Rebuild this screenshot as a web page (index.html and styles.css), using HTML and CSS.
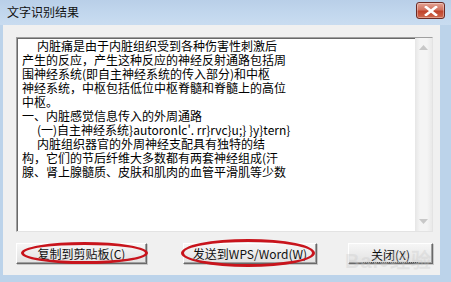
FILE: index.html
```html
<!DOCTYPE html>
<html lang="zh-CN">
<head>
<meta charset="utf-8">
<title>文字识别结果</title>
<link rel="stylesheet" href="styles.css">
</head>
<body>
<div class="window">
  <div class="titlebar">
    <span class="title">文字识别结果</span>
    <div class="close-btn">
      <svg width="14" height="10" viewBox="0 0 14 10"><path d="M2 1 L12 9 M12 1 L2 9" stroke="#fff" stroke-width="2.6" stroke-linecap="square"/></svg>
    </div>
  </div>
  <div class="client">
    <div class="editbox">
      <div class="text">
        <div class="line ind">内脏痛是由于内脏组织受到各种伤害性刺激后</div>
        <div class="line">产生的反应，产生这种反应的神经反射通路包括周</div>
        <div class="line">围神经系统(即自主神经系统的传入部分)和中枢</div>
        <div class="line">神经系统，中枢包括低位中枢脊髓和脊髓上的高位</div>
        <div class="line">中枢。</div>
        <div class="line">一、内脏感觉信息传入的外周通路</div>
        <div class="line ind">(一)自主神经系统}autoronlc'. rr}rvc}u;} }y}tern}</div>
        <div class="line ind">内脏组织器官的外周神经支配具有独特的结</div>
        <div class="line">构，它们的节后纤维大多数都有两套神经组成(汗</div>
        <div class="line">腺、肾上腺髓质、皮肤和肌肉的血管平滑肌等少数</div>
      </div>
      <div class="scrollbar">
        <svg class="arrow" width="9" height="5" viewBox="0 0 9 5"><path d="M0 5 L4.5 0 L9 5 Z" fill="#c8c8c8"/></svg>
        <svg class="arrow" width="9" height="5" viewBox="0 0 9 5"><path d="M0 0 L4.5 5 L9 0 Z" fill="#c8c8c8"/></svg>
      </div>
    </div>
    <div class="buttons">
      <div class="btn btn-copy">复制到剪贴板(C)</div>
      <div class="btn btn-send">发送到WPS/Word(W)</div>
      <div class="btn btn-close"><span class="focus">关闭(X)</span></div>
    </div>
    <div class="watermark">Bai<span class="wm-paw">●</span>经验</div>
    <div class="ellipse e1"></div>
    <div class="ellipse e2"></div>
  </div>
</div>
</body>
</html>
```

FILE: styles.css
```css
html, body {
  margin: 0;
  padding: 0;
}
body {
  width: 451px;
  height: 282px;
  overflow: hidden;
  font-family: "Noto Sans CJK SC", "Liberation Sans", sans-serif;
  font-size: 12px;
  color: #000;
}
.window {
  width: 451px;
  height: 282px;
  display: flex;
  flex-direction: column;
  background: #bcd3ea;
  box-sizing: border-box;
}
.titlebar {
  height: 25px;
  flex: none;
  display: flex;
  align-items: center;
  justify-content: space-between;
  padding: 0 6px 0 7px;
  background: linear-gradient(#b9cfe8, #c3d8ee 60%, #c9dcf0);
  box-sizing: border-box;
}
.title {
  font-size: 12px;
  color: #111;
  line-height: 14px;
  margin-top: -1px;
}
.close-btn {
  width: 29px;
  height: 17px;
  margin-top: -4px;
  box-sizing: border-box;
  border: 1px solid #6b2a24;
  border-radius: 3px;
  background: linear-gradient(#e3a394, #d1725f 45%, #c0432c 55%, #cf6a4f);
  display: flex;
  align-items: center;
  justify-content: center;
  box-shadow: inset 0 0 0 1px rgba(255,255,255,0.35);
}
.client {
  position: relative;
  flex: 1;
  margin: 0 11px 7px 3px;
  background: #f0f0f0;
  display: flex;
  flex-direction: column;
  padding: 12px 7px 0 13px;
}
.editbox {
  height: 195px;
  box-sizing: border-box;
  background: #fff;
  border-top: 1px solid #a0a0a0;
  border-left: 1px solid #a0a0a0;
  border-right: 1px solid #e3e3e3;
  border-bottom: 1px solid #e3e3e3;
  box-shadow: inset 1px 1px 0 #696969;
  display: flex;
}
.text {
  flex: 1;
  padding: 1px 0 0 5px;
  line-height: 14px;
  font-size: 12px;
  white-space: nowrap;
  overflow: hidden;
  color: #000;
}
.line.ind {
  text-indent: 15px;
}
.scrollbar {
  width: 17px;
  flex: none;
  background: linear-gradient(90deg, #e6e6e6, #f4f4f4 30%, #f4f4f4 70%, #e9e9e9);
  display: flex;
  flex-direction: column;
  justify-content: space-between;
  align-items: center;
  padding: 7px 0 7px;
  box-sizing: border-box;
}
.buttons {
  display: flex;
  margin-top: 11px;
  height: 21px;
}
.btn {
  box-sizing: border-box;
  height: 21px;
  display: flex;
  align-items: center;
  justify-content: center;
  background: linear-gradient(#f6f6f6, #ececec 50%, #e2e2e2);
  border-top: 1px solid #fff;
  border-left: 1px solid #fff;
  border-right: 1px solid #696969;
  border-bottom: 1px solid #696969;
  box-shadow: inset -1px -1px 0 #a0a0a0, 1px 1px 0 #c8c8c8;
  font-size: 12px;
  color: #111;
}
.btn-copy {
  width: 131px;
}
.btn-send {
  width: 134px;
  margin-left: 36px;
}
.btn-close {
  width: 85px;
  margin-left: 31px;
}
.focus {
  padding: 0 8px;
  border-bottom: 1px dotted #555;
  line-height: 15px;
  margin-top: 2px;
}
.watermark {
  position: absolute;
  left: 342px;
  top: 220px;
  font-size: 20px;
  font-family: "Liberation Sans", sans-serif;
  font-weight: bold;
  color: rgba(200, 200, 200, 0.35);
  letter-spacing: 1px;
  pointer-events: none;
}
.wm-paw {
  font-size: 16px;
}
.ellipse {
  position: absolute;
  border: 3px solid #c8141c;
  border-radius: 50%;
  box-sizing: border-box;
}
.e1 {
  left: 18px;
  top: 217px;
  width: 127px;
  height: 22px;
}
.e2 {
  left: 178px;
  top: 214px;
  width: 134px;
  height: 28px;
}
```
